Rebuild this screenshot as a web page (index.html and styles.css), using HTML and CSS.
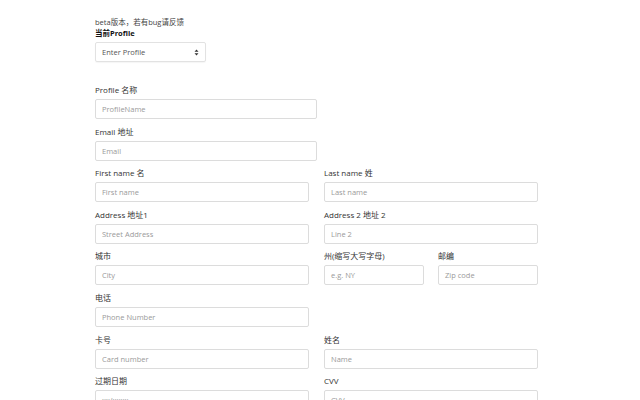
FILE: index.html
```html
<!DOCTYPE html>
<html>
<head>
<meta charset="utf-8">
<link rel="stylesheet" href="styles.css">
</head>
<body>
<div class="page">
  <div class="notice">beta版本，若有bug请反馈</div>
  <div class="current">当前Profile</div>
  <div class="select">
    <span>Enter Profile</span>
    <svg class="caret" width="5" height="7" viewBox="0 0 5 7"><path d="M0.5 2.8 L2.5 0.6 L4.5 2.8 Z M0.5 4.2 L2.5 6.4 L4.5 4.2 Z" fill="#333"/></svg>
  </div>

  <form class="form">
    <div class="row">
      <div class="group wide">
        <label>Profile 名称</label>
        <div class="input">ProfileName</div>
      </div>
    </div>
    <div class="row">
      <div class="group wide">
        <label>Email 地址</label>
        <div class="input">Email</div>
      </div>
    </div>
    <div class="row">
      <div class="group half">
        <label>First name 名</label>
        <div class="input">First name</div>
      </div>
      <div class="group half">
        <label>Last name 姓</label>
        <div class="input">Last name</div>
      </div>
    </div>
    <div class="row">
      <div class="group half">
        <label>Address 地址1</label>
        <div class="input">Street Address</div>
      </div>
      <div class="group half">
        <label>Address 2 地址 2</label>
        <div class="input">Line 2</div>
      </div>
    </div>
    <div class="row">
      <div class="group half">
        <label>城市</label>
        <div class="input">City</div>
      </div>
      <div class="group quarter">
        <label>州(缩写大写字母)</label>
        <div class="input">e.g. NY</div>
      </div>
      <div class="group quarter">
        <label>邮编</label>
        <div class="input">Zip code</div>
      </div>
    </div>
    <div class="row">
      <div class="group half">
        <label>电话</label>
        <div class="input">Phone Number</div>
      </div>
    </div>
    <div class="row">
      <div class="group half">
        <label>卡号</label>
        <div class="input">Card number</div>
      </div>
      <div class="group half">
        <label>姓名</label>
        <div class="input">Name</div>
      </div>
    </div>
    <div class="row">
      <div class="group half">
        <label>过期日期</label>
        <div class="input">xx/xxxx</div>
      </div>
      <div class="group half">
        <label>CVV</label>
        <div class="input">CVV</div>
      </div>
    </div>
  </form>
</div>
</body>
</html>
```

FILE: styles.css
```css
html, body {
  margin: 0;
  padding: 0;
  background: #fff;
  overflow: hidden;
}
body {
  font-family: "Open Sans", "Noto Sans CJK SC", sans-serif;
  font-size: 7.5px;
  color: #333;
}
.page {
  padding: 16px 0 0 95px;
  width: 443px;
}
.notice {
  line-height: 12px;
  color: #444;
}
.current {
  line-height: 11px;
  font-weight: bold;
  color: #111;
}
.select {
  margin-top: 3px;
  width: 111px;
  height: 20px;
  box-sizing: border-box;
  border: 1px solid #e2e2e2;
  border-radius: 2px;
  display: flex;
  align-items: center;
  justify-content: space-between;
  padding: 0 6px 0 6px;
  color: #555;
  box-shadow: 0 1px 1px rgba(0,0,0,0.04);
}
.caret {
  display: block;
}
.form {
  margin-top: 22px;
}
.row {
  display: flex;
  gap: 15px;
}
.group {
  display: flex;
  flex-direction: column;
  margin-bottom: 6.6px;
}
.wide { width: 222px; }
.half { width: 214px; }
.quarter { width: 100px; }
.row .quarter + .quarter { margin-left: -1px; }
label {
  font-size: 8px;
  line-height: 11px;
  margin-bottom: 4px;
  color: #333;
}
.input {
  height: 20px;
  box-sizing: border-box;
  border: 1px solid #dcdcdc;
  border-radius: 2px;
  padding: 0 6px;
  display: flex;
  align-items: center;
  color: #9a9a9a;
  font-size: 7.5px;
}
```
